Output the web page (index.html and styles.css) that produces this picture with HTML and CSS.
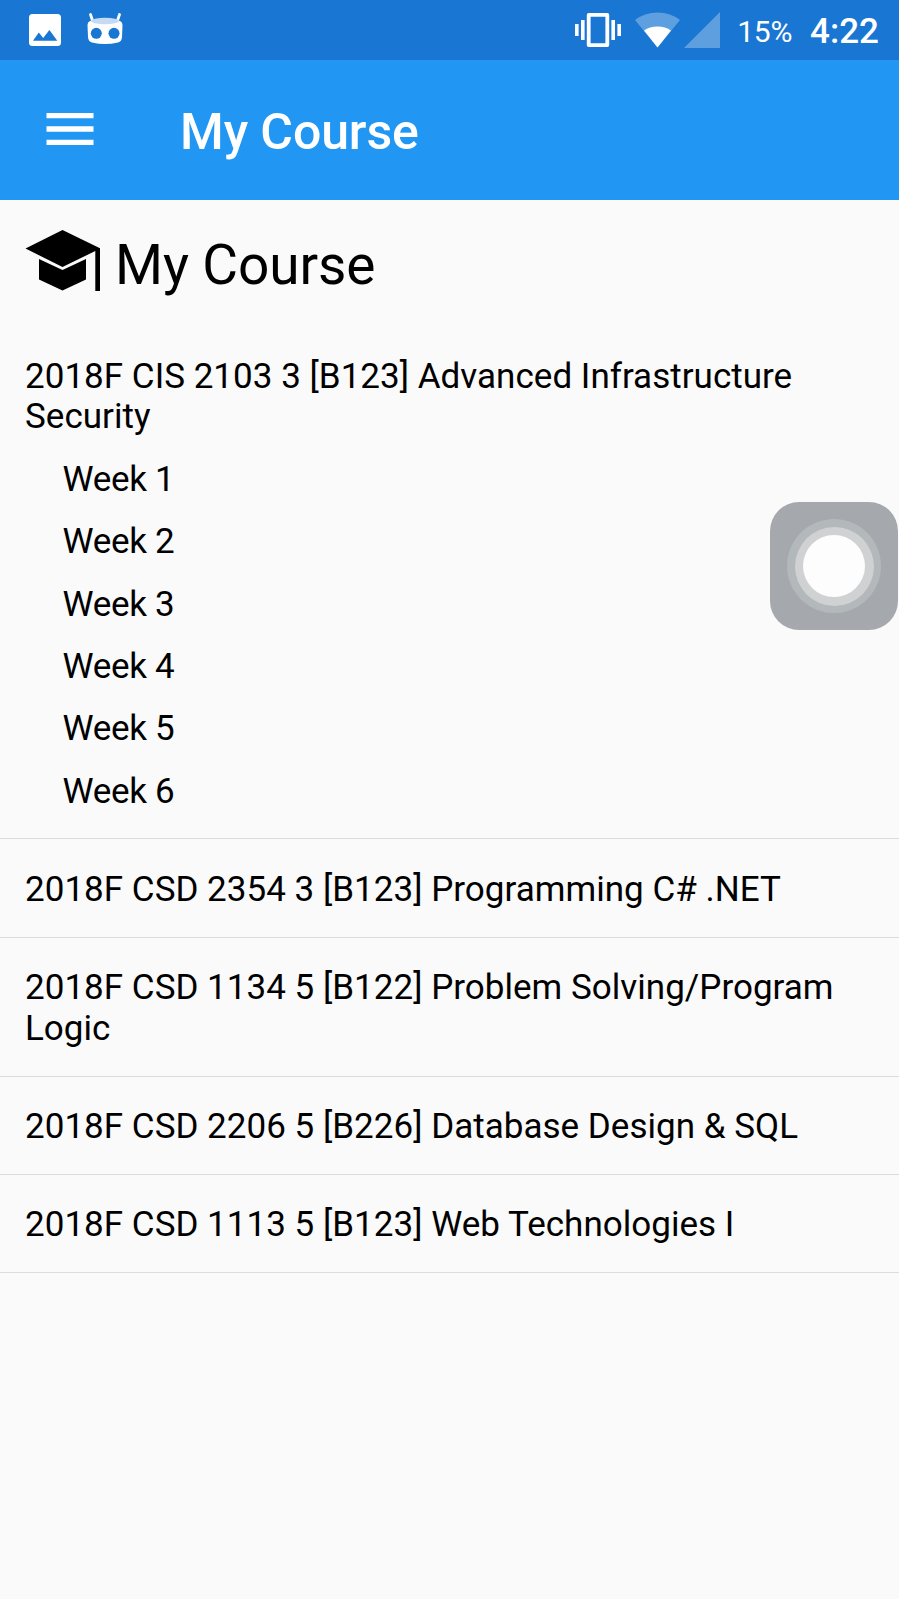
FILE: index.html
```html
<!DOCTYPE html>
<html lang="en">
<head>
<meta charset="utf-8">
<title>My Course</title>
<link rel="stylesheet" href="styles.css">
</head>
<body>
<div class="status-bar">
  <svg class="icon-photo" width="32" height="32" viewBox="0 0 32 32"><path fill="#fff" fill-rule="evenodd" d="M3.500 0h25a3.500 3.500 0 0 1 3.500 3.500v25a3.500 3.500 0 0 1-3.500 3.500h-25a3.500 3.500 0 0 1-3.500-3.500v-25a3.500 3.500 0 0 1 3.500-3.500zM4 26.800h24.300L20.400 16l-6.200 8-4.400-5.500z"/></svg>
  <svg class="icon-cyan" width="36" height="32" viewBox="0 0 36 32">
    <path d="M3.500 1.500l2 6M32.500 1.500l-2 6" stroke="#fff" stroke-width="2.800" stroke-linecap="round"/>
    <path fill="#fff" d="M3 8q15-4 30 0q2.500 1 2.500 4l-.5 12q-.3 4.500-4 5.500q-13 3-26 0q-3.700-1-4-5.500L.5 12q0-3 2.500-4z"/>
    <ellipse cx="18" cy="8" rx="14" ry="3.200" fill="#c5dbf4"/>
    <circle cx="9.300" cy="20.300" r="5.500" fill="#1976d2"/><circle cx="27" cy="20.300" r="5.500" fill="#1976d2"/>
  </svg>
  <div class="status-right">
    <svg width="46" height="36" viewBox="0 0 46 36"><path fill="none" stroke="#fff" stroke-width="3.800" d="M13.700 2.900h18.600v30.200H13.700z" stroke-linejoin="round"/><path fill="#fff" d="M0 12h3.600v12H0zM6 8h3.600v20H6zM36.400 8H40v20h-3.600zM42.400 12H46v12h-3.600z"/></svg>
    <svg class="icon-wifi" width="45" height="36" viewBox="0 0 45 36"><path fill="#5e9fe0" d="M22.500 35.500L0 8Q9.500.5 22.500.5T45 8z"/><path fill="#fff" d="M22.500 35.500L9 18.500q5.500-4 13.500-4t13.500 4z"/></svg>
    <svg class="icon-signal" width="36" height="36" viewBox="0 0 36 36"><path fill="#5e9fe0" d="M0 36L36 0v36z"/></svg>
    <span class="battery">15%</span>
    <span class="clock">4:22</span>
  </div>
</div>
<header class="app-bar">
  <svg width="48" height="32" viewBox="0 0 48 32"><path fill="#fff" d="M.5 0H47.500v5.300H.5zM.5 13.300H47.500v5.400H.5zM.5 26.700H47.500V32H.5z"/></svg>
  <h1 class="app-title">My Course</h1>
</header>
<main>
  <div class="heading">
    <svg width="76" height="62" viewBox="0 0 76 62"><path d="M37.500 0L75 18.300V61H70.300V21L37.500 37 .5 18.500zM14 29L37.500 40 61 29V49.500L37.500 60.500 14 49.500z"/></svg>
    <h2 class="heading-text">My Course</h2>
  </div>
  <section class="course">
    <div class="course-name">2018F CIS 2103 3 [B123] Advanced Infrastructure Security</div>
    <ul class="weeks">
      <li>Week 1</li><li>Week 2</li><li>Week 3</li><li>Week 4</li><li>Week 5</li><li>Week 6</li>
    </ul>
  </section>
  <section class="course"><div class="course-name">2018F CSD 2354 3 [B123] Programming C# .NET</div></section>
  <section class="course"><div class="course-name">2018F CSD 1134 5 [B122] Problem Solving/Program Logic</div></section>
  <section class="course"><div class="course-name">2018F CSD 2206 5 [B226] Database Design &amp; SQL</div></section>
  <section class="course"><div class="course-name">2018F CSD 1113 5 [B123] Web Technologies I</div></section>
</main>
<div class="assist"><div class="assist-outer"><div class="assist-mid"><div class="assist-dot"></div></div></div></div>
</body>
</html>
```
FILE: styles.css
```css
* { box-sizing: border-box; }
body {
  margin: 0;
  min-height: 1599px;
  position: relative;
  background: #fafafa;
  color: #000;
  font-family: Roboto, sans-serif;
  font-size: 35px;
}
svg { display: block; flex: none; }
.status-bar {
  height: 60px;
  background: #1976d2;
  color: #fff;
  display: flex;
  align-items: center;
  padding: 0 20px 0 29px;
}
.icon-cyan { margin-left: 26px; margin-top: -3px; }
.status-right { display: flex; align-items: center; margin-left: auto; }
.icon-wifi { margin-left: 14px; }
.icon-signal { margin-left: 4px; }
.battery { font-size: 30px; line-height: 60px; margin-left: 17px; padding-top: 3px; letter-spacing: -0.300px; }
.clock { font-size: 35px; font-weight: 500; line-height: 60px; margin-left: 18px; padding-top: 3px; }
.app-bar {
  height: 140px;
  background: #2196f3;
  color: #fff;
  display: flex;
  align-items: center;
  padding-left: 46px;
}
.app-bar svg { margin-top: -2px; }
.app-title { margin: 4px 0 0 86px; font-size: 50px; line-height: 60px; font-weight: 500; letter-spacing: -0.100px; }
.heading {
  height: 126px;
  display: flex;
  align-items: flex-start;
  padding: 30px 0 0 25px;
}
.heading-text { margin: 3px 0 0 14px; font-size: 55px; line-height: 64px; font-weight: 400; letter-spacing: -0.120px; }
.course {
  padding: 30.500px 25px 25.700px;
  border-bottom: 1px solid #dcdcdc;
  line-height: 40.900px;
}
.course-name { letter-spacing: 0.020px; }
.weeks { list-style: none; margin: 0; padding: 0 0 0 37.500px; letter-spacing: -0.300px; }
.weeks li { margin-top: 21.500px; }
.assist {
  position: absolute;
  left: 770px;
  top: 502px;
  width: 128px;
  height: 128px;
  border-radius: 29px;
  background: #a5a9ad;
  display: grid;
  place-items: center;
}
.assist div { border-radius: 50%; display: grid; place-items: center; }
.assist-outer { width: 94px; height: 94px; background: #b3b8ba; }
.assist-mid { width: 79px; height: 79px; background: #d0d1d2; }
.assist-dot { width: 62px; height: 62px; background: #fdfdfd; }
```
